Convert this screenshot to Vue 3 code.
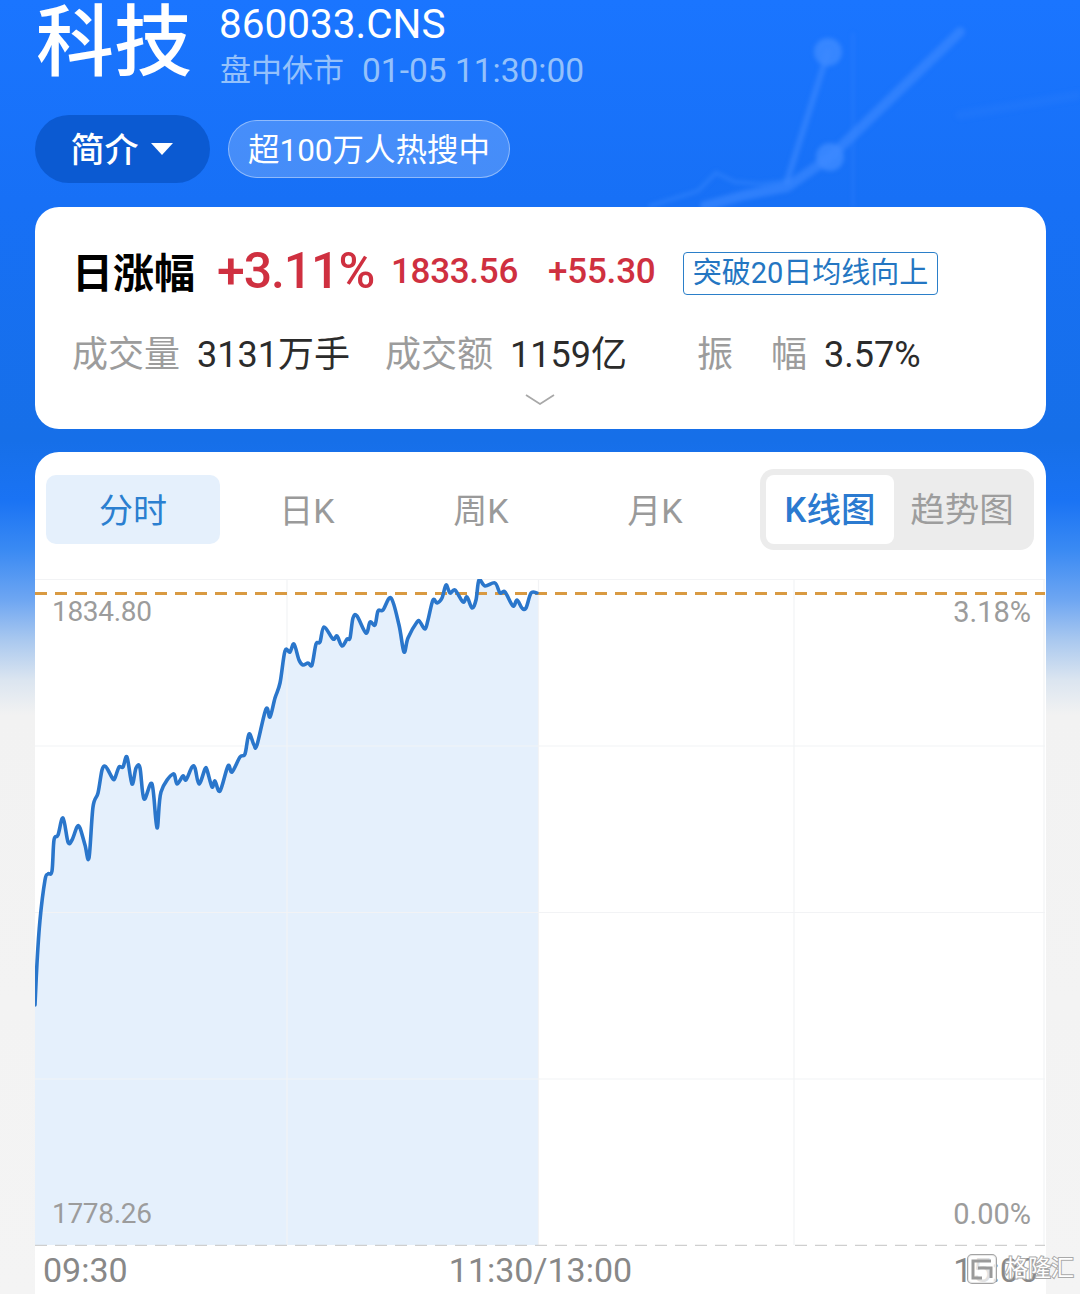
<script setup>
import { computed } from 'vue'

const tabs = [
  { label: '分时', active: true },
  { label: '日K' },
  { label: '周K' },
  { label: '月K' },
]

// traced by eye from the reference, page coords
const pts = [
  [35,1005],[37,963],[40,920],[45,880],[48,874],[52,871],[54,840],[58,835],[63,818],[68,842],[72,840],[77,827],[80,828],
  [85,845],[89,858],[93,807],[98,793],[102,770],[105,766],[108,770],[113,779],[115,778],[119,767],[123,767],[127,757],
  [132,784],[136,768],[140,768],[144,799],[152,784],[157,828],[161,792],[173,774],[177,784],[183,776],[186,780],
  [192,767],[195,768],[199,784],[205,769],[207,770],[212,787],[215,781],[220,791],[228,766],[232,772],[240,757],
  [245,754],[249,734],[254,745],[257,745],[266,709],[270,717],[275,698],[280,683],[285,651],[290,652],[294,644],
  [299,660],[303,665],[308,663],[312,665],[316,644],[320,642],[324,627],[333,639],[337,636],[342,646],[347,639],
  [350,638],[353,618],[357,616],[366,633],[370,622],[375,625],[378,611],[383,610],[391,598],[399,625],[404,652],
  [408,638],[417,622],[420,622],[425,629],[428,620],[433,600],[437,603],[442,598],[446,585],[450,593],[455,590],
  [463,602],[467,597],[472,608],[476,600],[479,580],[485,586],[495,583],[500,593],[505,592],[513,606],[517,600],
  [522,608],[526,608],[531,593],[537,593],
]

const linePath = computed(() => {
  let d = `M${pts[0][0]} ${pts[0][1]}`
  for (let i = 0; i < pts.length - 1; i++) {
    const p0 = pts[i - 1] || pts[i]
    const p1 = pts[i]
    const p2 = pts[i + 1]
    const p3 = pts[i + 2] || p2
    const c1x = p1[0] + (p2[0] - p0[0]) / 6
    const c1y = p1[1] + (p2[1] - p0[1]) / 6
    const c2x = p2[0] - (p3[0] - p1[0]) / 6
    const c2y = p2[1] - (p3[1] - p1[1]) / 6
    d += `C${c1x.toFixed(1)} ${c1y.toFixed(1)} ${c2x.toFixed(1)} ${c2y.toFixed(1)} ${p2[0]} ${p2[1]}`
  }
  return d
})
const areaPath = computed(() => linePath.value + 'L538 593L538 1245L35 1245Z')
</script>

<template>
  <div class="page">
    <svg class="deco" viewBox="0 0 1080 210" width="1080" height="210">
      <g fill="none" stroke="#3f8bff" stroke-linecap="round" stroke-opacity=".6">
        <path d="M650 206L698 191L716 173L735 182L760 184L787 181" stroke-width="4" stroke-opacity=".4" />
        <path d="M828 52L787 181" stroke-width="6" />
        <path d="M705 206L745 195L787 187L830 157L960 32" stroke-width="10" />
        <path d="M853 34L853 206" stroke-width="3" stroke-opacity=".25" />
        <path d="M960 115L1080 95" stroke-width="10" stroke-opacity=".12" />
      </g>
      <circle cx="828" cy="52" r="14" fill="#3f8bff" fill-opacity=".8" />
      <circle cx="830" cy="157" r="14" fill="#3f8bff" fill-opacity=".8" />
    </svg>

    <header class="head">
      <h1 class="name">科技</h1>
      <div class="meta">
        <div class="code">860033.CNS</div>
        <div class="status"><span class="status-cn">盘中休市</span><span>01-05 11:30:00</span></div>
      </div>
    </header>

    <div class="pills">
      <button class="pill-intro">简介<i class="caret"></i></button>
      <span class="pill-hot">超100万人热搜中</span>
    </div>

    <section class="card quote">
      <div class="quote-top">
        <span class="quote-title">日涨幅</span>
        <span class="pct">+3.11%</span>
        <span class="price">1833.56</span>
        <span class="change">+55.30</span>
        <span class="signal">突破20日均线向上</span>
      </div>
      <div class="quote-stats">
        <span class="stat stat-vol"><em>成交量</em><b>3131万手</b></span>
        <span class="stat stat-amt"><em>成交额</em><b>1159亿</b></span>
        <span class="stat stat-amp"><em class="spread"><u>振</u><u>幅</u></em><b>3.57%</b></span>
      </div>
      <svg class="chevron" width="32" height="13" viewBox="0 0 32 13">
        <path d="M2 2L16 11L30 2" fill="none" stroke="#a8a8a8" stroke-width="1.8" />
      </svg>
    </section>

    <section class="card chart-card">
      <div class="tabbar">
        <div class="tabs">
          <div v-for="t in tabs" :key="t.label" class="tab" :class="{ on: t.active }">{{ t.label }}</div>
        </div>
        <div class="segment">
          <div class="seg seg-on">K线图</div>
          <div class="seg">趋势图</div>
        </div>
      </div>

      <div class="chart">
        <svg class="plot" viewBox="35 579 1010 667" width="1010" height="667">
          <path :d="areaPath" fill="#e5f0fc" />
          <g stroke="#f2f3f5" stroke-width="1.2">
            <path d="M35 579.5H1045M35 746H1045M35 912.5H1045M35 1079H1045" />
            <path d="M287 579V1245M538.5 579V1245M794 579V1245M1044 579V1245" />
          </g>
          <path d="M35 1246H1045" stroke="#cfcfcf" stroke-width="2.6" stroke-dasharray="12 8" />
          <path d="M35 593.5H1045" stroke="#d99a42" stroke-width="3" stroke-dasharray="12 8" />
          <path :d="linePath" fill="none" stroke="#2a76cb" stroke-width="3.6" stroke-linejoin="round" stroke-linecap="round" />
        </svg>
        <span class="ax ax-tl">1834.80</span>
        <span class="ax ax-tr">3.18%</span>
        <span class="ax ax-bl">1778.26</span>
        <span class="ax ax-br">0.00%</span>
      </div>

      <div class="times">
        <span>09:30</span>
        <span>11:30/13:00</span>
        <span class="time-end">15:00</span>
      </div>
    </section>

    <div class="mark">
      <svg width="34" height="34" viewBox="0 0 34 34">
        <rect x="3" y="3" width="28" height="28" rx="4" fill="#fff" fill-opacity=".75" stroke="#a3a3a3" stroke-width="2" />
        <path d="M26 9H8V26H17M13 16H26V26" fill="none" stroke="#9a9a9a" stroke-width="3" />
      </svg>
      <span>格隆汇</span>
    </div>
  </div>
</template>

<style scoped>
.page {
  position: relative;
  width: 1080px;
  height: 1294px;
  overflow: hidden;
  font-family: Roboto, "Noto Sans CJK SC", sans-serif;
  background: linear-gradient(180deg, #1a75ff 0, #1770f6 200px, #166fe8 440px, #1a73f4 500px, #3a8af3 550px, #6ea6f2 600px, #a9c8ef 640px, #dbe5f0 680px, #f2f2f2 715px, #f4f4f4 100%);
}
.deco {
  position: absolute;
  left: 0;
  top: 0;
  filter: blur(2px);
}
.head {
  position: relative;
  display: flex;
  align-items: flex-start;
  height: 115px;
  padding-left: 36px;
  color: #fff;
}
.name {
  margin: 0;
  font-size: 78px;
  line-height: 88px;
  font-weight: 500;
}
.meta {
  margin-left: 28px;
  padding-top: 2px;
}
.code {
  margin-left: -1px;
  font-size: 40.5px;
  line-height: 44px;
}
.status {
  display: flex;
  gap: 18px;
  margin-top: 2px;
  font-size: 33.5px;
  line-height: 46px;
  color: #94c1fb;
}
.status-cn {
  font-size: 31px;
}
.pills {
  position: relative;
  display: flex;
  align-items: center;
  gap: 18px;
  height: 68px;
  padding-left: 35px;
}
.pill-intro {
  display: flex;
  align-items: center;
  justify-content: center;
  gap: 12px;
  width: 175px;
  height: 68px;
  border: 0;
  border-radius: 34px;
  padding: 0 2px 4px 0;
  background: #0b5ad2;
  color: #fff;
  font: inherit;
  font-size: 34px;
  font-weight: 500;
}
.caret {
  width: 0;
  height: 0;
  margin-top: 4px;
  border-left: 11px solid transparent;
  border-right: 11px solid transparent;
  border-top: 12px solid #fff;
}
.pill-hot {
  display: flex;
  align-items: center;
  justify-content: center;
  box-sizing: border-box;
  width: 282px;
  height: 58px;
  padding-bottom: 4px;
  border: 1px solid rgba(255, 255, 255, .4);
  border-radius: 29px;
  background: rgba(255, 255, 255, .2);
  color: #fff;
  font-size: 31.5px;
}
.card {
  position: relative;
  width: 1011px;
  margin-left: 35px;
  border-radius: 24px;
  background: #fff;
}
.quote {
  box-sizing: border-box;
  height: 222px;
  margin-top: 24px;
  padding: 34px 0 0 40px;
}
.quote-top {
  display: flex;
  align-items: center;
  height: 60px;
}
.quote-title {
  width: 145px;
  margin-top: -3px;
  margin-left: -3px;
  font-size: 41px;
  font-weight: 700;
  color: #000;
}
.pct {
  width: 174px;
  font-size: 50px;
  font-weight: 500;
  color: #cf3040;
  letter-spacing: -1.1px;
}
.price {
  width: 157px;
  font-size: 35px;
  font-weight: 500;
  letter-spacing: -.3px;
  color: #cf3040;
}
.change {
  width: 135px;
  font-size: 35px;
  font-weight: 500;
  letter-spacing: -.2px;
  color: #cf3040;
}
.signal {
  box-sizing: border-box;
  width: 255px;
  height: 43px;
  margin-top: 5px;
  border: 1px solid #2b7fc9;
  border-radius: 4px;
  color: #2476c2;
  font-size: 29px;
  line-height: 40px;
  text-align: center;
}
.quote-stats {
  display: flex;
  margin-top: 31px;
  margin-left: -3px;
  font-size: 36px;
  line-height: 46px;
}
.stat {
  display: flex;
  gap: 17px;
}
.stat em {
  font-style: normal;
  color: #9c9c9c;
}
.stat b {
  font-weight: 400;
  color: #2b2b2b;
}
.stat-vol {
  width: 313px;
}
.stat-amt {
  width: 312px;
}
.spread {
  display: flex;
  justify-content: space-between;
  width: 110px;
}
.spread u {
  text-decoration: none;
}
.chevron {
  position: absolute;
  left: 489px;
  top: 186px;
}
.chart-card {
  height: 900px;
  margin-top: 23px;
}
.tabbar {
  display: flex;
  justify-content: space-between;
  box-sizing: border-box;
  height: 127px;
  padding: 17px 12px 0 11px;
}
.tabs {
  display: flex;
}
.tab {
  width: 174px;
  height: 69px;
  margin-top: 6px;
  border-radius: 10px;
  color: #9a9a9a;
  font-size: 34px;
  line-height: 72px;
  text-align: center;
}
.tab.on {
  background: #e5f0fc;
  color: #2b7fd0;
}
.segment {
  display: flex;
  box-sizing: border-box;
  width: 274px;
  height: 81px;
  padding: 6px;
  border-radius: 14px;
  background: #ececec;
}
.seg {
  width: 128px;
  border-radius: 8px;
  color: #9d9d9d;
  font-size: 34.5px;
  line-height: 71px;
  text-align: center;
}
.seg + .seg {
  margin-left: 4px;
}
.seg-on {
  background: #fff;
  color: #2b7ad0;
  font-weight: 500;
}
.chart {
  position: relative;
  height: 667px;
}
.plot {
  display: block;
}
.ax {
  position: absolute;
  color: #9c9c9c;
  font-size: 28px;
  letter-spacing: -.3px;
  line-height: 34px;
}
.ax-tl { left: 17px; top: 16px; }
.ax-tr { right: 15px; top: 16px; font-size: 29px; letter-spacing: 0; }
.ax-bl { left: 17px; top: 618px; }
.ax-br { right: 15px; top: 618px; font-size: 29px; letter-spacing: 0; }
.times {
  display: grid;
  grid-template-columns: 1fr auto 1fr;
  padding: 4px 8px 0;
  color: #888;
  font-size: 34px;
  line-height: 40px;
}
.time-end {
  justify-self: end;
}
.mark {
  position: absolute;
  left: 965px;
  top: 1252px;
  display: flex;
  align-items: center;
  gap: 6px;
  color: #fff;
  font-size: 23px;
  line-height: 34px;
  -webkit-text-stroke: 2px #a9a9a9;
  paint-order: stroke fill;
}
</style>
